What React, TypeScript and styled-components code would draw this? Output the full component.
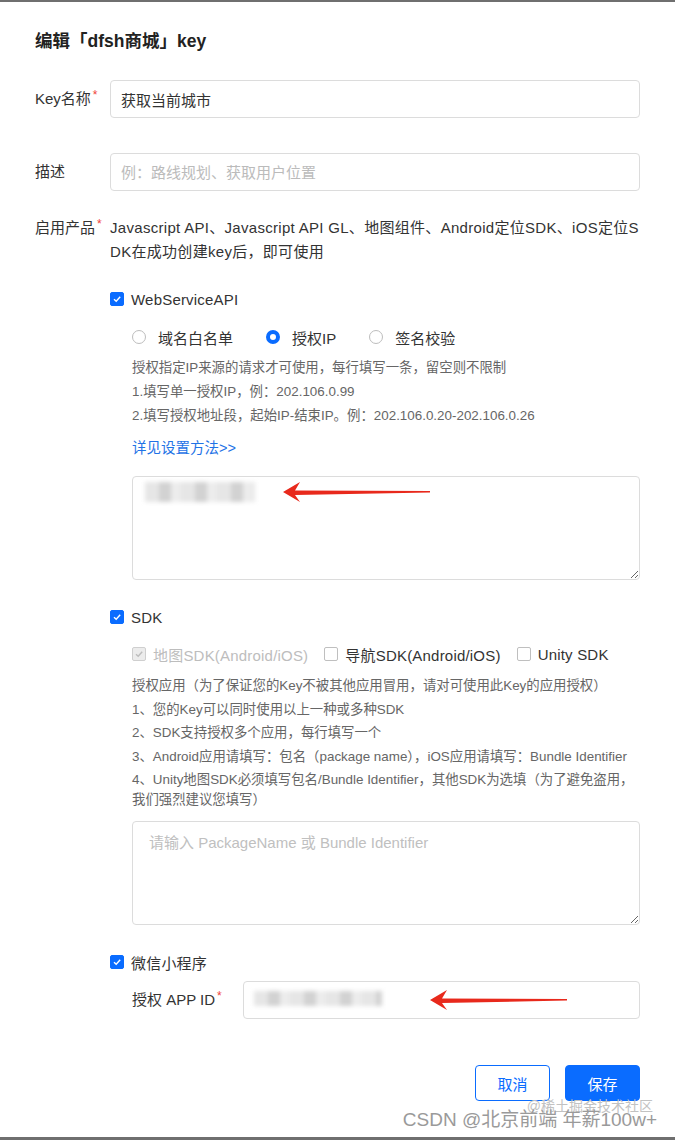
import styled, { createGlobalStyle } from 'styled-components';

const GlobalStyle = createGlobalStyle`
  * { box-sizing: border-box; }
  body {
    margin: 0;
    background: #fff;
    color: #333;
    font-family: "Liberation Sans", "Noto Sans CJK SC", sans-serif;
  }
`;

const BLUE = '#0a6cff';

const Dialog = styled.div`
  position: relative;
  width: 675px;
  height: 1140px;
  border-top: 2px solid #6f6f6f;
  border-bottom: 3px solid #6f6f6f;
  padding: 27px 35px 0;
  overflow: hidden;
`;

const Title = styled.h2`
  margin: 0;
  font-size: 17.5px;
  line-height: 24px;
  font-weight: bold;
  color: #222;
`;

const FormRow = styled.div<{ $top: number; $align?: string }>`
  display: grid;
  grid-template-columns: 75px 1fr;
  align-items: ${p => p.$align || 'center'};
  margin-top: ${p => p.$top}px;
`;

const Label = styled.label`
  font-size: 15px;
  line-height: 24px;
  color: #333;
  white-space: nowrap;
`;

const Required = styled.sup`
  color: #f0443a;
  font-size: 12px;
  margin-left: 2px;
  vertical-align: 5px;
  line-height: 0;
`;

const TextInput = styled.input`
  width: 100%;
  height: 38px;
  padding: 0 10px;
  border: 1px solid #dcdcdc;
  border-radius: 4px;
  font-family: inherit;
  font-size: 15px;
  color: #333;
  outline: none;
  &::placeholder { color: #bbb; }
`;

const ProductText = styled.div`
  font-size: 15px;
  line-height: 24px;
  letter-spacing: 0.3px;
  color: #333;
  word-break: break-all;
`;

const Group = styled.div<{ $top: number }>`
  margin-top: ${p => p.$top}px;
`;

const CheckRow = styled.label<{ $disabled?: boolean }>`
  display: inline-flex;
  align-items: center;
  gap: 7px;
  height: 20px;
  font-size: 15px;
  letter-spacing: 0.2px;
  color: ${p => (p.$disabled ? '#bdbdbd' : '#333')};
  white-space: nowrap;
`;

const Box = styled.span<{ $checked?: boolean; $disabled?: boolean }>`
  display: inline-flex;
  align-items: center;
  justify-content: center;
  width: 14px;
  height: 14px;
  border-radius: 2px;
  border: 1px solid ${p => (p.$disabled ? '#cfcfcf' : p.$checked ? BLUE : '#bfbfbf')};
  background: ${p => (p.$disabled ? '#ececec' : p.$checked ? BLUE : '#fff')};
  flex: none;
`;

const Indent = styled.div`
  padding-left: 22px;
`;

const OptionRow = styled.div<{ $top: number; $gap: number }>`
  display: flex;
  align-items: center;
  gap: ${p => p.$gap}px;
  margin-top: ${p => p.$top}px;
`;

const RadioItem = styled.label`
  display: inline-flex;
  align-items: center;
  gap: 12px;
  height: 20px;
  font-size: 15px;
  color: #333;
`;

const RadioDot = styled.span<{ $checked?: boolean }>`
  width: 14px;
  height: 14px;
  border-radius: 50%;
  flex: none;
  border: ${p => (p.$checked ? `4px solid ${BLUE}` : '1px solid #bdbdbd')};
  background: #fff;
`;

const HelpList = styled.div<{ $top: number; $lh: number; $gap: number }>`
  margin-top: ${p => p.$top}px;
  display: flex;
  flex-direction: column;
  gap: ${p => p.$gap}px;
  font-size: 13.4px;
  line-height: ${p => p.$lh}px;
  color: #666;
`;

const HelpLink = styled.a`
  display: block;
  margin-top: 10px;
  font-size: 14.5px;
  line-height: 20px;
  color: #1f73e6;
  text-decoration: none;
`;

const AreaWrap = styled.div<{ $top: number }>`
  position: relative;
  margin-top: ${p => p.$top}px;
  height: 104px;
`;

const TextArea = styled.textarea`
  display: block;
  width: 100%;
  height: 104px;
  padding: 10px 16px;
  border: 1px solid #dcdcdc;
  border-radius: 4px;
  font-family: inherit;
  font-size: 15px;
  line-height: 22px;
  color: #333;
  outline: none;
  &::placeholder { color: #c0c0c0; }
`;

const Redacted = styled.div<{ $left: number; $top: number; $w: number; $h: number }>`
  position: absolute;
  left: ${p => p.$left}px;
  top: ${p => p.$top}px;
  width: ${p => p.$w}px;
  height: ${p => p.$h}px;
  background: repeating-linear-gradient(90deg, #e6e6e6 0 14px, #d2d2d2 14px 26px, #ececec 26px 36px);
  filter: blur(2px);
`;

const Arrow = styled.svg<{ $left: number; $top: number }>`
  position: absolute;
  left: ${p => p.$left}px;
  top: ${p => p.$top}px;
`;

const AppIdRow = styled.div`
  display: grid;
  grid-template-columns: 111px 1fr;
  align-items: center;
  margin-top: 9px;
`;

const InputWrap = styled.div`
  position: relative;
`;

const Footer = styled.div`
  display: flex;
  justify-content: flex-end;
  gap: 15px;
  margin-top: 46px;
`;

const Button = styled.button<{ $primary?: boolean }>`
  width: 75px;
  height: 36px;
  border-radius: 4px;
  border: 1px solid ${BLUE};
  background: ${p => (p.$primary ? BLUE : '#fff')};
  color: ${p => (p.$primary ? '#fff' : BLUE)};
  font-family: inherit;
  font-size: 15px;
  cursor: pointer;
`;

const Watermark = styled.div`
  position: absolute;
  right: 18px;
  bottom: 6px;
  color: #9a9a9a;
  font-size: 19px;
  line-height: 22px;
  white-space: nowrap;
`;

const WatermarkSmall = styled.div`
  position: absolute;
  right: 22px;
  bottom: 22px;
  color: #c2c2c2;
  font-size: 14px;
  white-space: nowrap;
`;

const Check = ({ color = '#fff' }: { color?: string }) => (
  <svg width="10" height="10" viewBox="0 0 10 10">
    <path d="M2 5.2 L4.2 7.3 L8.2 2.8" fill="none" stroke={color} strokeWidth="1.4" />
  </svg>
);

const CheckBox = ({ checked, disabled, label }: { checked?: boolean; disabled?: boolean; label: string }) => (
  <CheckRow $disabled={disabled}>
    <Box $checked={checked} $disabled={disabled}>
      {checked && <Check color={disabled ? '#bdbdbd' : '#fff'} />}
    </Box>
    {label}
  </CheckRow>
);

const RedArrow = ({ left, top, length }: { left: number; top: number; length: number }) => (
  <Arrow $left={left} $top={top} width={length} height="24" viewBox={`0 0 ${length} 24`}>
    <path d={`M0 12 L17 2 L12 10.5 L${length} 11 L${length} 12.6 L12 15 L17 22 Z`} fill="#e8291c" />
  </Arrow>
);

const App = () => {
  return (
    <Dialog>
      <GlobalStyle />
      <Title>编辑「dfsh商城」key</Title>

      <FormRow $top={27}>
        <Label>Key名称<Required>*</Required></Label>
        <TextInput defaultValue="获取当前城市" />
      </FormRow>

      <FormRow $top={35}>
        <Label>描述</Label>
        <TextInput placeholder="例：路线规划、获取用户位置" />
      </FormRow>

      <FormRow $top={25} $align="start">
        <Label>启用产品<Required>*</Required></Label>
        <div>
          <ProductText>
            Javascript API、Javascript API GL、地图组件、Android定位SDK、iOS定位SDK在成功创建key后，即可使用
          </ProductText>

          <Group $top={25}>
            <CheckBox checked label="WebServiceAPI" />
            <Indent>
              <OptionRow $top={18} $gap={33}>
                <RadioItem><RadioDot />域名白名单</RadioItem>
                <RadioItem><RadioDot $checked />授权IP</RadioItem>
                <RadioItem><RadioDot />签名校验</RadioItem>
              </OptionRow>
              <HelpList $top={9} $lh={24} $gap={0}>
                <div>授权指定IP来源的请求才可使用，每行填写一条，留空则不限制</div>
                <div>1.填写单一授权IP，例：202.106.0.99</div>
                <div>2.填写授权地址段，起始IP-结束IP。例：202.106.0.20-202.106.0.26</div>
              </HelpList>
              <HelpLink href="#">详见设置方法&gt;&gt;</HelpLink>
              <AreaWrap $top={18}>
                <TextArea />
                <Redacted $left={13} $top={6} $w={110} $h={20} />
                <RedArrow left={151} top={4} length={147} />
              </AreaWrap>
            </Indent>
          </Group>

          <Group $top={27}>
            <CheckBox checked label="SDK" />
            <Indent>
              <OptionRow $top={17} $gap={16}>
                <CheckBox checked disabled label="地图SDK(Android/iOS)" />
                <CheckBox label="导航SDK(Android/iOS)" />
                <CheckBox label="Unity SDK" />
              </OptionRow>
              <HelpList $top={12} $lh={20} $gap={3.5}>
                <div>授权应用（为了保证您的Key不被其他应用冒用，请对可使用此Key的应用授权）</div>
                <div>1、您的Key可以同时使用以上一种或多种SDK</div>
                <div>2、SDK支持授权多个应用，每行填写一个</div>
                <div>3、Android应用请填写：包名（package name），iOS应用请填写：Bundle Identifier</div>
                <div>4、Unity地图SDK必须填写包名/Bundle Identifier，其他SDK为选填（为了避免盗用，我们强烈建议您填写）</div>
              </HelpList>
              <AreaWrap $top={11}>
                <TextArea placeholder="请输入 PackageName 或 Bundle Identifier" />
              </AreaWrap>
            </Indent>
          </Group>

          <Group $top={27}>
            <CheckBox checked label="微信小程序" />
            <Indent>
              <AppIdRow>
                <Label>授权 APP ID<Required>*</Required></Label>
                <InputWrap>
                  <TextInput />
                  <Redacted $left={11} $top={10} $w={128} $h={15} />
                  <RedArrow left={187} top={7} length={137} />
                </InputWrap>
              </AppIdRow>
            </Indent>
          </Group>

          <Footer>
            <Button>取消</Button>
            <Button $primary>保存</Button>
          </Footer>
        </div>
      </FormRow>

      <WatermarkSmall>@稀土掘金技术社区</WatermarkSmall>
      <Watermark>CSDN @北京前端 年薪100w+</Watermark>
    </Dialog>
  );
};

export default App;
